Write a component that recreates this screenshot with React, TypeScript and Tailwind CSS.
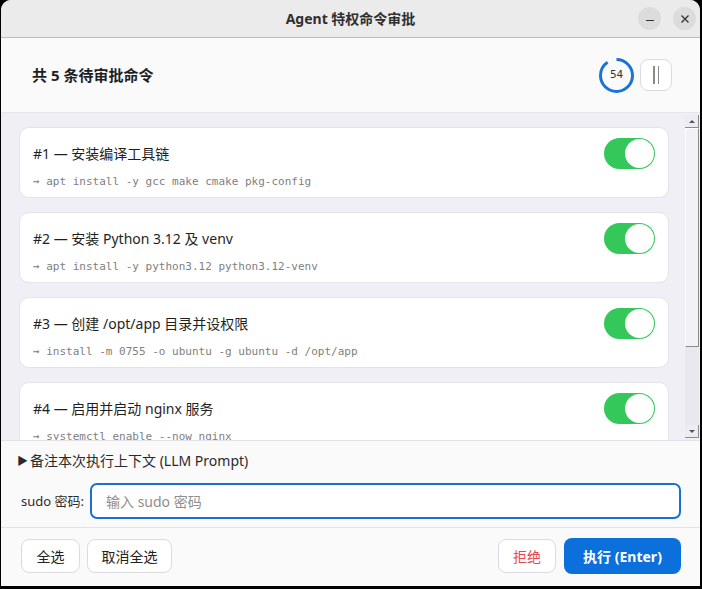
import React, { useState } from "react";

interface Cmd {
  id: number;
  title: string;
  command: string;
}

// only the first four fit in the visible list area
const COMMANDS: Cmd[] = [
  { id: 1, title: "安装编译工具链", command: "apt install -y gcc make cmake pkg-config" },
  { id: 2, title: "安装 Python 3.12 及 venv", command: "apt install -y python3.12 python3.12-venv" },
  { id: 3, title: "创建 /opt/app 目录并设权限", command: "install -m 0755 -o ubuntu -g ubuntu -d /opt/app" },
  { id: 4, title: "启用并启动 nginx 服务", command: "systemctl enable --now nginx" },
];

const SANS = "font-['Noto_Sans','Noto_Sans_CJK_SC',sans-serif]";

function Toggle({ on, onClick }: { on: boolean; onClick: () => void }) {
  return (
    <button
      onClick={onClick}
      className={`w-[51px] h-[31px] rounded-full p-[1px] flex items-center shrink-0 ${on ? "bg-[#34c759] justify-end" : "bg-[#d9d9de] justify-start"}`}
    >
      <span className="w-[29px] h-[29px] rounded-full bg-white block" />
    </button>
  );
}

function Timer({ value }: { value: number }) {
  const r = 16;
  const c = 2 * Math.PI * r;
  const frac = value / 60;
  return (
    <div className="relative w-[37px] h-[37px]">
      <svg width="37" height="37" viewBox="0 0 37 37" className="absolute inset-0">
        <circle
          cx="18.5"
          cy="18.5"
          r={r}
          fill="none"
          stroke="#1a73d9"
          strokeWidth="3"
          strokeDasharray={`${c * frac} ${c}`}
          transform="rotate(-90 18.5 18.5)"
        />
      </svg>
      <div className="absolute inset-0 flex items-center justify-center font-['DejaVu_Sans_Mono',monospace] text-[11px] text-[#333]">
        {value}
      </div>
    </div>
  );
}

export default function App() {
  const [enabled, setEnabled] = useState<boolean[]>(COMMANDS.map(() => true));

  const toggle = (i: number) => setEnabled((prev) => prev.map((v, j) => (j === i ? !v : v)));

  return (
    <div className={`w-[702px] h-[589px] bg-black pl-[1px] ${SANS}`}>
      <div className="w-[699px] h-[586px] rounded-t-[10px] overflow-hidden bg-[#fafafb] flex flex-col">
        {/* Title bar */}
        <div className="h-[38px] shrink-0 bg-[#ebebeb] border-b border-[#bdbdbd] flex items-center relative">
          <div className="flex-1 text-center text-[14px] font-bold text-[#303030]">Agent 特权命令审批</div>
          <div className="absolute right-[4px] top-0 h-full flex items-center gap-[12px]">
            <span className="w-[23px] h-[23px] rounded-full bg-[#dcdcdc] flex items-center justify-center">
              <span className="w-[8px] h-[1.5px] bg-[#333] mt-[4px]" />
            </span>
            <span className="w-[23px] h-[23px] rounded-full bg-[#dcdcdc] flex items-center justify-center">
              <svg width="10" height="10" viewBox="0 0 10 10">
                <path d="M1.5 1.5 L8.5 8.5 M8.5 1.5 L1.5 8.5" stroke="#333" strokeWidth="1.3" />
              </svg>
            </span>
          </div>
        </div>

        {/* Header */}
        <div className="h-[74px] shrink-0 flex items-center justify-between pl-[31px] pr-[28px]">
          <div className="text-[15px] font-bold text-[#1f1f1f]">共 5 条待审批命令</div>
          <div className="flex items-center gap-[5px]">
            <Timer value={54} />
            <button className="w-[32px] h-[32px] rounded-[8px] border border-[#dcdce0] bg-white flex items-center justify-center gap-[3px]">
              <span className="w-[1.5px] h-[18px] bg-[#8a8a8a]" />
              <span className="w-[1.5px] h-[18px] bg-[#8a8a8a]" />
            </button>
          </div>
        </div>

        {/* Command list */}
        <div className="h-[328px] shrink-0 bg-[#efeff5] flex border-t border-[#e6e6ec]">
          <div className="flex-1 overflow-hidden pt-[14px] pl-[18px] pr-[16px] flex flex-col gap-[14px]">
            {COMMANDS.map((c, i) => (
              <div
                key={c.id}
                className="h-[71px] shrink-0 bg-white rounded-[10px] border border-[#e3e3ea] pl-[13px] pr-[13px] flex items-start justify-between"
              >
                <div className="flex flex-col pt-[16px]">
                  <div className="text-[14px] text-[#1f1f1f] leading-[20px]">
                    #{c.id} — {c.title}
                  </div>
                  <div className="mt-[11px] font-['DejaVu_Sans_Mono',monospace] text-[11px] text-[#808080] leading-[14px]">
                    → {c.command}
                  </div>
                </div>
                <div className="pt-[10px]">
                  <Toggle on={enabled[i]} onClick={() => toggle(i)} />
                </div>
              </div>
            ))}
          </div>
          {/* Scrollbar */}
          <div className="w-[14px] shrink-0 pt-[2px] pb-[2px] mr-[1px] flex flex-col">
            <div className="h-[13px] bg-[#ececf2] border-r border-b border-[#8c8c8c] flex items-center justify-center">
              <span className="w-0 h-0 border-l-[3px] border-r-[3px] border-b-[3px] border-l-transparent border-r-transparent border-b-[#555]" />
            </div>
            <div className="flex-1 bg-[#e8e8ee] flex flex-col">
              <div className="h-[219px] bg-[#f1f1f6] border-l border-t border-white border-r border-b border-r-[#8c8c8c] border-b-[#8c8c8c]" />
            </div>
            <div className="h-[13px] bg-[#ececf2] border-r border-b border-[#8c8c8c] flex items-center justify-center">
              <span className="w-0 h-0 border-l-[3px] border-r-[3px] border-t-[3px] border-l-transparent border-r-transparent border-t-[#555]" />
            </div>
          </div>
        </div>

        {/* Prompt + password */}
        <div className="h-[87px] shrink-0 border-t border-[#e2e2e8] pl-[16px] pr-[19px] flex flex-col">
          <div className="pt-[10px] text-[14px] text-[#2a2a2a] leading-[20px] flex items-center gap-[2px]">
            <span className="text-[11px]">▶</span>
            <span>备注本次执行上下文 (LLM Prompt)</span>
          </div>
          <div className="mt-[12px] flex items-center gap-[6px] pl-[4px]">
            <span className="shrink-0 text-[13px] leading-[18px] text-[#2a2a2a] whitespace-nowrap">sudo 密码:</span>
            <input
              type="password"
              placeholder="输入 sudo 密码"
              className="flex-1 min-w-0 h-[36px] rounded-[7px] border-2 border-[#1c6fd1] bg-white px-[14px] text-[14px] placeholder:text-[#8e8e8e] outline-none"
            />
          </div>
        </div>

        {/* Footer */}
        <div className="flex-1 border-t border-[#e2e2e8] flex items-center justify-between pl-[20px] pr-[19px] pb-[2px]">
          <div className="flex gap-[7px]">
            <button className="w-[59px] h-[34px] rounded-[8px] border border-[#dcdce0] bg-white text-[14px] text-[#222]">全选</button>
            <button className="w-[85px] h-[34px] rounded-[8px] border border-[#dcdce0] bg-white text-[14px] text-[#222]">取消全选</button>
          </div>
          <div className="flex gap-[8px] items-center">
            <button className="w-[58px] h-[34px] rounded-[8px] border border-[#dcdce0] bg-white text-[14px] text-[#e5484d]">拒绝</button>
            <button className="w-[117px] h-[36px] rounded-[8px] bg-[#0b6fdc] text-[14px] font-bold text-white">执行 (Enter)</button>
          </div>
        </div>
      </div>
    </div>
  );
}
